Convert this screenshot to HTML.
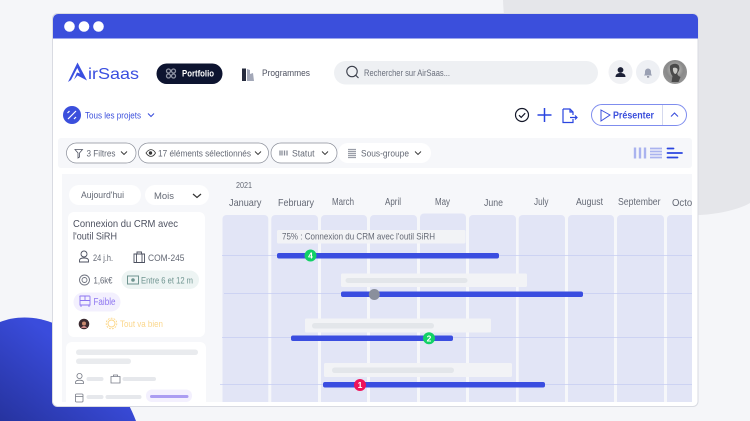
<!DOCTYPE html>
<html lang="fr"><head><meta charset="utf-8"><title>AirSaas</title>
<style>html,body{margin:0;padding:0;background:#f5f6f9}svg{display:block}text{font-family:"Liberation Sans",sans-serif;fill:#646975}</style></head>
<body>
<svg width="750" height="421" viewBox="0 0 750 421" xmlns="http://www.w3.org/2000/svg">
<defs>
<linearGradient id="bl" x1="0" y1="1" x2="1" y2="0"><stop offset="0" stop-color="#26339f"/><stop offset=".6" stop-color="#3a4cdc"/><stop offset="1" stop-color="#3a4fe0"/></linearGradient>
<radialGradient id="ph" cx=".5" cy=".4" r=".65"><stop offset="0" stop-color="#d0d0cc"/><stop offset=".55" stop-color="#8a8a8a"/><stop offset="1" stop-color="#979797"/></radialGradient>
<clipPath id="ch"><rect x="62" y="174" width="630" height="228"/></clipPath>
</defs>
<rect width="750" height="421" fill="#f5f6f9"/>
<path d="M503 0C505 70 545 125 610 175C640 200 680 216 700 215C720 214 740 209 750 203L750 0Z" fill="#e5e6ea"/>
<path d="M0 322C25 312 60 318 85 345C110 372 126 395 136 421L0 421Z" fill="url(#bl)"/>
<rect x="52.500" y="13.500" width="645.500" height="393" rx="5" fill="#fff" stroke="#d9dbe2"/>
<path d="M53 38.500V19a5 5 0 0 1 5-5H693a5 5 0 0 1 5 5V38.500Z" fill="#3b4fdc"/>
<circle cx="69.500" cy="26.500" r="5.300" fill="#fff"/><circle cx="84" cy="26.500" r="5.300" fill="#fff"/><circle cx="98.500" cy="26.500" r="5.300" fill="#fff"/>

<!-- logo -->
<path d="M68 82L77.500 62.500L87 80.500L77.500 75.500L74 79.500L77 72.500L80 73.500L77.300 68L71 80Z" fill="#3a4fe0"/>
<text x="88" y="79" font-size="16" textLength="51" lengthAdjust="spacingAndGlyphs" style="fill:#3a4fe0">irSaas</text>
<rect x="156.500" y="63.500" width="66" height="20.500" rx="10.200" fill="#0d1430"/>
<g fill="none" stroke="#8d92a3" stroke-width="1.300"><circle cx="168.500" cy="71" r="2"/><circle cx="173.500" cy="71" r="2"/><circle cx="168.500" cy="76" r="2"/><circle cx="173.500" cy="76" r="2"/></g>
<text x="182" y="76.500" font-size="9.500" font-weight="700" textLength="32" lengthAdjust="spacingAndGlyphs" style="fill:#fff">Portfolio</text>
<path d="M242 68.500h4v12.500h-4z" fill="#262b3d"/><path d="M247 69l3 1v4l3-1 1 8h-7z" fill="#a3a8b8"/>
<text x="262" y="76" font-size="9.500" textLength="48" lengthAdjust="spacingAndGlyphs" style="fill:#4d5160">Programmes</text>
<rect x="334" y="61" width="264" height="23.500" rx="11.700" fill="#eef0f3"/>
<circle cx="352" cy="71.500" r="5.200" fill="none" stroke="#3a3e4a" stroke-width="1.100"/><path d="M355.800 75.300L358.500 78" stroke="#3a3e4a" stroke-width="1.100"/>
<text x="364" y="76" font-size="8.800" textLength="86" lengthAdjust="spacingAndGlyphs" style="fill:#6a6f7c">Rechercher sur AirSaas...</text>
<circle cx="620.500" cy="72" r="12" fill="#f0f1f4"/>
<circle cx="620.500" cy="70" r="2.900" fill="#1c2036"/><path d="M615.500 77c0-2.800 2-4 5-4s5 1.200 5 4z" fill="#1c2036"/>
<circle cx="648" cy="72" r="12" fill="#eef0f4"/>
<path d="M644 75.500c1-1 1-2.500 1-4a3 3 0 0 1 6 0c0 1.500 0 3 1 4z" fill="#9aa0b3"/><rect x="647" y="76.300" width="2.200" height="1.200" fill="#6d7285"/>
<circle cx="675" cy="72" r="12" fill="url(#ph)"/>
<path d="M670 66c2-3 8-3 9 0 1 3 0 5-1.500 7-.5 2 1 3 3 4l-2 5h-7l1-6c-2-2-3-7-2.500-10z" fill="#4a4a4a"/><path d="M673 68c2-1 4 0 4.500 1 .2 2-.5 4-2 5-1.500 0-3-3-2.500-6z" fill="#c9c9c6"/>

<!-- toolbar -->
<circle cx="72" cy="115" r="9" fill="#3b4fdc"/>
<path d="M68 119l8-8M67.500 113l2-2M74 119l2-2" stroke="#fff" stroke-width="1.200"/>
<text x="85" y="118.500" font-size="9" textLength="56" lengthAdjust="spacingAndGlyphs" style="fill:#3b4fdc">Tous les projets</text>
<path d="M148 113.500l3 3 3-3" fill="none" stroke="#3b4fdc" stroke-width="1.100"/>
<circle cx="522" cy="115" r="6.500" fill="none" stroke="#14182a" stroke-width="1.200"/><path d="M519 115.200l2.200 2.200 4-4.200" fill="none" stroke="#14182a" stroke-width="1.200"/>
<path d="M544.500 108v14M537.500 115h14" stroke="#2a45e0" stroke-width="1.500"/>
<path d="M563 109h7l3 3v3M573 119v3.500h-10V109M570 109v3h3M570 117.500h7M575 115.500l2 2-2 2" fill="none" stroke="#2a45e0" stroke-width="1.200"/>
<rect x="591.500" y="104.500" width="95" height="21" rx="10.500" fill="#fff" stroke="#7f8dee"/>
<path d="M662.500 105v20" stroke="#d5d9ee"/>
<path d="M601 110l9 5-9 6z" fill="none" stroke="#3b4fdc" stroke-width="1"/>
<text x="613" y="118.500" font-size="9.800" font-weight="700" textLength="41" lengthAdjust="spacingAndGlyphs" style="fill:#3b4fdc">Présenter</text>
<path d="M671 116.500l3.500-3.500 3.500 3.500" fill="none" stroke="#3b4fdc" stroke-width="1.100"/>

<!-- filter bar -->
<rect x="58" y="138" width="634" height="30" rx="3" fill="#f6f7fa"/>
<g fill="#fff" stroke="#8a8e99" stroke-width=".7">
<rect x="66.500" y="143" width="69.500" height="20" rx="10"/>
<rect x="138.500" y="143" width="130" height="20" rx="10"/>
<rect x="271" y="143" width="66" height="20" rx="10"/>
</g>
<rect x="338" y="143" width="93" height="20" rx="10" fill="#fff"/>
<path d="M75 149.500h7.500l-3 3.500v4l-1.500 1v-5z" fill="none" stroke="#4d5160" stroke-width=".8"/>
<text x="86.500" y="156.500" font-size="9" textLength="29" lengthAdjust="spacingAndGlyphs">3 Filtres</text>
<path d="M121 151.500l3 3 3-3" fill="none" stroke="#333" stroke-width=".9"/>
<path d="M146 153c3-4.500 7-4.500 9.500 0-2.500 4.500-6.500 4.500-9.500 0z" fill="none" stroke="#333" stroke-width=".8"/><circle cx="150.500" cy="153" r="1.700" fill="#333"/>
<text x="158" y="156.500" font-size="9" textLength="93" lengthAdjust="spacingAndGlyphs">17 éléments sélectionnés</text>
<path d="M255 151.500l3 3 3-3" fill="none" stroke="#333" stroke-width=".9"/>
<path d="M280 150.500v5M282 150.500v5M284.500 150.500v5M287 150.500v5" stroke="#8a8e99" stroke-width="1.300"/>
<text x="292" y="156.500" font-size="9" textLength="22.500" lengthAdjust="spacingAndGlyphs">Statut</text>
<path d="M322 151.500l3 3 3-3" fill="none" stroke="#333" stroke-width=".9"/>
<path d="M348 149.500h8M348 151.500h8M348 153.500h8M348 155.500h8M348 157.500h8" stroke="#9a9ea8" stroke-width="1.200"/>
<text x="361" y="156.500" font-size="9" textLength="48" lengthAdjust="spacingAndGlyphs">Sous-groupe</text>
<path d="M415 151.500l3 3 3-3" fill="none" stroke="#333" stroke-width=".9"/>
<path d="M635 147.500v11M640 147.500v11M645 147.500v11" stroke="#aab3ef" stroke-width="2.400"/>
<path d="M650 148.500h12M650 151.500h12M650 154.500h12M650 157.500h12" stroke="#aab3ef" stroke-width="1.800"/>
<path d="M667.500 148.500h6M667.500 153h14.500M667.500 157.500h10" stroke="#2a45e0" stroke-width="1.800" stroke-linecap="round"/>

<!-- main panel -->
<rect x="62" y="174" width="630" height="228" fill="#f6f7fa"/>
<rect x="69" y="185" width="72" height="20" rx="10" fill="#fff"/>
<rect x="145" y="185" width="64" height="20" rx="10" fill="#fff"/>
<text x="81" y="198" font-size="9.500" textLength="43" lengthAdjust="spacingAndGlyphs">Aujourd'hui</text>
<text x="154" y="199" font-size="9.500" textLength="20" lengthAdjust="spacingAndGlyphs">Mois</text>
<path d="M193 194l4 3.500 4-3.500" fill="none" stroke="#333" stroke-width="1.200"/>

<text x="236" y="188" font-size="8" textLength="16" lengthAdjust="spacingAndGlyphs">2021</text>
<g clip-path="url(#ch)">
<text x="229" y="206" textLength="32.500" lengthAdjust="spacingAndGlyphs" font-size="10.500">January</text>
<text x="278" y="206" textLength="36" lengthAdjust="spacingAndGlyphs" font-size="10.500">February</text>
<text x="332" y="205" textLength="22" lengthAdjust="spacingAndGlyphs" font-size="10">March</text>
<text x="385" y="205" textLength="16" lengthAdjust="spacingAndGlyphs" font-size="10">April</text>
<text x="435" y="205" textLength="15" lengthAdjust="spacingAndGlyphs" font-size="10">May</text>
<text x="484" y="206" textLength="19" lengthAdjust="spacingAndGlyphs" font-size="10.500">June</text>
<text x="534" y="205" textLength="14.500" lengthAdjust="spacingAndGlyphs" font-size="10">July</text>
<text x="576" y="205" textLength="27" lengthAdjust="spacingAndGlyphs" font-size="10">August</text>
<text x="618" y="205" textLength="42.500" lengthAdjust="spacingAndGlyphs" font-size="10">September</text>
<text x="672" y="206" font-size="10.500" textLength="34" lengthAdjust="spacingAndGlyphs">October</text>

<g fill="#e2e5f6">
<path d="M222.500 402V219a4 4 0 0 1 4-4H264.300a4 4 0 0 1 4 4V402Z"/>
<path d="M271.300 402V219a4 4 0 0 1 4-4H314a4 4 0 0 1 4 4V402Z"/>
<path d="M321 402V219a4 4 0 0 1 4-4H363a4 4 0 0 1 4 4V402Z"/>
<path d="M370 402V219a4 4 0 0 1 4-4H413a4 4 0 0 1 4 4V402Z"/>
<path d="M420 402V217.500a4 4 0 0 1 4-4H462a4 4 0 0 1 4 4V402Z"/>
<path d="M469 402V219a4 4 0 0 1 4-4H512a4 4 0 0 1 4 4V402Z"/>
<path d="M518.700 402V219a4 4 0 0 1 4-4H561a4 4 0 0 1 4 4V402Z"/>
<path d="M568 402V219a4 4 0 0 1 4-4H610a4 4 0 0 1 4 4V402Z"/>
<path d="M617 402V219a4 4 0 0 1 4-4H660a4 4 0 0 1 4 4V402Z"/>
<path d="M667 402V219a4 4 0 0 1 4-4H692V402Z"/>
</g>
<g stroke="#c6cdf2" stroke-width=".8" fill="none">
<path d="M222 255.500H692M224 293.500H692M222 337.500H692M220 384.500H692"/>
</g>
<g fill="#f2f3f6">
<rect x="277" y="230" width="188.500" height="13.500" rx="1.500"/>
<rect x="341" y="273.500" width="186" height="13.500" rx="1.500"/>
<rect x="305" y="318.500" width="186" height="14" rx="1.500"/>
<rect x="324" y="363" width="188" height="14" rx="1.500"/>
</g>
<g fill="#e3e6ea">
<rect x="345.500" y="278" width="122" height="5" rx="2.500"/>
<rect x="312" y="323" width="122" height="5.500" rx="2.700"/>
<rect x="332" y="367.500" width="122" height="5.500" rx="2.700"/>
</g>
<text x="282" y="239.500" font-size="8.800" textLength="153" lengthAdjust="spacingAndGlyphs">75% : Connexion du CRM avec l'outil SiRH</text>
<g fill="#3a4de0">
<rect x="277" y="253" width="222" height="5.500" rx="2"/>
<rect x="341" y="291.500" width="242" height="5.500" rx="2"/>
<rect x="291" y="335.500" width="162" height="5.500" rx="2"/>
<rect x="323" y="382" width="222" height="5.500" rx="2"/>
</g>
<circle cx="310.500" cy="255.500" r="6" fill="#12d166"/>
<circle cx="374.300" cy="294.500" r="5.500" fill="#8a8f9c"/>
<circle cx="429" cy="338.300" r="6" fill="#12d166"/>
<circle cx="360" cy="385" r="6" fill="#f0145a"/>
<g font-size="8.500" font-weight="700" text-anchor="middle">
<text x="310.500" y="258.500" style="fill:#fff">4</text>
<text x="429" y="341.300" style="fill:#fff">2</text>
<text x="360" y="388" style="fill:#fff">1</text>
</g>
</g>

<!-- card 1 -->
<rect x="68" y="212" width="137" height="125" rx="6" fill="#fff"/>
<text x="73" y="227" font-size="10.500" textLength="105" lengthAdjust="spacingAndGlyphs" style="fill:#4d5160">Connexion du CRM avec</text>
<text x="73" y="239.500" font-size="10.500" textLength="44" lengthAdjust="spacingAndGlyphs" style="fill:#4d5160">l'outil SiRH</text>
<circle cx="84" cy="254" r="3" fill="none" stroke="#4d5160" stroke-width=".9"/><path d="M79.500 262v-1.500c0-2 2-2.500 4.500-2.500s4.500.5 4.500 2.500v1.500z" fill="none" stroke="#4d5160" stroke-width=".9"/>
<text x="93" y="261" font-size="9.500" textLength="20" lengthAdjust="spacingAndGlyphs">24 j.h.</text>
<path d="M134 254h10.500v8.500h-10.500zM137 254v-2h4.500v2M136.500 254v8.500M142 254v8.500" fill="none" stroke="#4d5160" stroke-width=".9"/>
<text x="148" y="261" font-size="9.500" textLength="36.500" lengthAdjust="spacingAndGlyphs">COM-245</text>
<circle cx="84.500" cy="280" r="5" fill="none" stroke="#6d717e" stroke-width=".9"/><circle cx="84.500" cy="280" r="2.500" fill="none" stroke="#6d717e" stroke-width=".9"/>
<text x="93.500" y="283.500" font-size="9.500" textLength="19" lengthAdjust="spacingAndGlyphs">1,6k€</text>
<rect x="121.500" y="270.500" width="77.500" height="18.500" rx="9.200" fill="#edf4f3"/>
<rect x="127.500" y="276" width="11" height="8" fill="none" stroke="#6f9490" stroke-width="1"/><circle cx="133" cy="280" r="1.800" fill="#6f9490"/>
<text x="141" y="283.500" font-size="9.300" textLength="52" lengthAdjust="spacingAndGlyphs" style="fill:#6f9490">Entre 6 et 12 m</text>
<rect x="73.500" y="292.500" width="47" height="19" rx="9.500" fill="#f3f0fe"/>
<path d="M80 296h9a.8.8 0 0 1 1 1v8H80v-8a.8.8 0 0 1 0-1zM80 300.500h10M85 296v4.500M81 305v2M89 305v2" fill="none" stroke="#8c74f0" stroke-width=".9"/>
<text x="93.500" y="305" font-size="10" textLength="22" lengthAdjust="spacingAndGlyphs" style="fill:#8c74f0">Faible</text>
<circle cx="84" cy="324" r="5.300" fill="#3b2a30"/><path d="M81 328a3.500 4 0 0 1 6 0z" fill="#d08a8a"/><circle cx="84" cy="323.500" r="2" fill="#c98a70"/>
<circle cx="111.500" cy="323.500" r="3.500" fill="none" stroke="#fcd583" stroke-width=".9"/><circle cx="111.500" cy="323.500" r="5.300" fill="none" stroke="#fcd583" stroke-width=".9" stroke-dasharray="1.800 1.200"/>
<text x="120" y="327" font-size="9.500" textLength="43" lengthAdjust="spacingAndGlyphs" style="fill:#fbd78c">Tout va bien</text>

<!-- card 2 -->
<path d="M66 402V348a6 6 0 0 1 6-6H200a6 6 0 0 1 6 6V402Z" fill="#fff"/>
<rect x="76" y="349.500" width="122" height="5.500" rx="2.700" fill="#e9ebee"/>
<rect x="76" y="358.500" width="55" height="5.500" rx="2.700" fill="#e9ebee"/>
<circle cx="79.500" cy="376" r="2.600" fill="none" stroke="#777b86" stroke-width=".8"/><path d="M75.500 383.500v-1c0-1.700 1.700-2.300 4-2.300s4 .6 4 2.300v1z" fill="none" stroke="#777b86" stroke-width=".8"/>
<rect x="86.500" y="377" width="17" height="4" rx="2" fill="#e6e8ec"/>
<path d="M111 376.500h9v6.500h-9zM113.500 376.500v-1.500h4v1.500" fill="none" stroke="#777b86" stroke-width=".8"/>
<rect x="122.500" y="377" width="33.500" height="4" rx="2" fill="#e6e8ec"/>
<rect x="75.500" y="394" width="7.500" height="8" rx="1" fill="none" stroke="#777b86" stroke-width=".8"/><path d="M75.500 396.500h7.500" stroke="#777b86" stroke-width=".8"/>
<rect x="86.500" y="395" width="17" height="4" rx="2" fill="#e6e8ec"/>
<rect x="105.500" y="395" width="36" height="4" rx="2" fill="#e6e8ec"/>
<rect x="146" y="389.500" width="46" height="12.500" rx="6" fill="#f3f0fe"/>
<rect x="150" y="395" width="38.500" height="3" rx="1.500" fill="#ab9df2"/>
</svg>
</body></html>
